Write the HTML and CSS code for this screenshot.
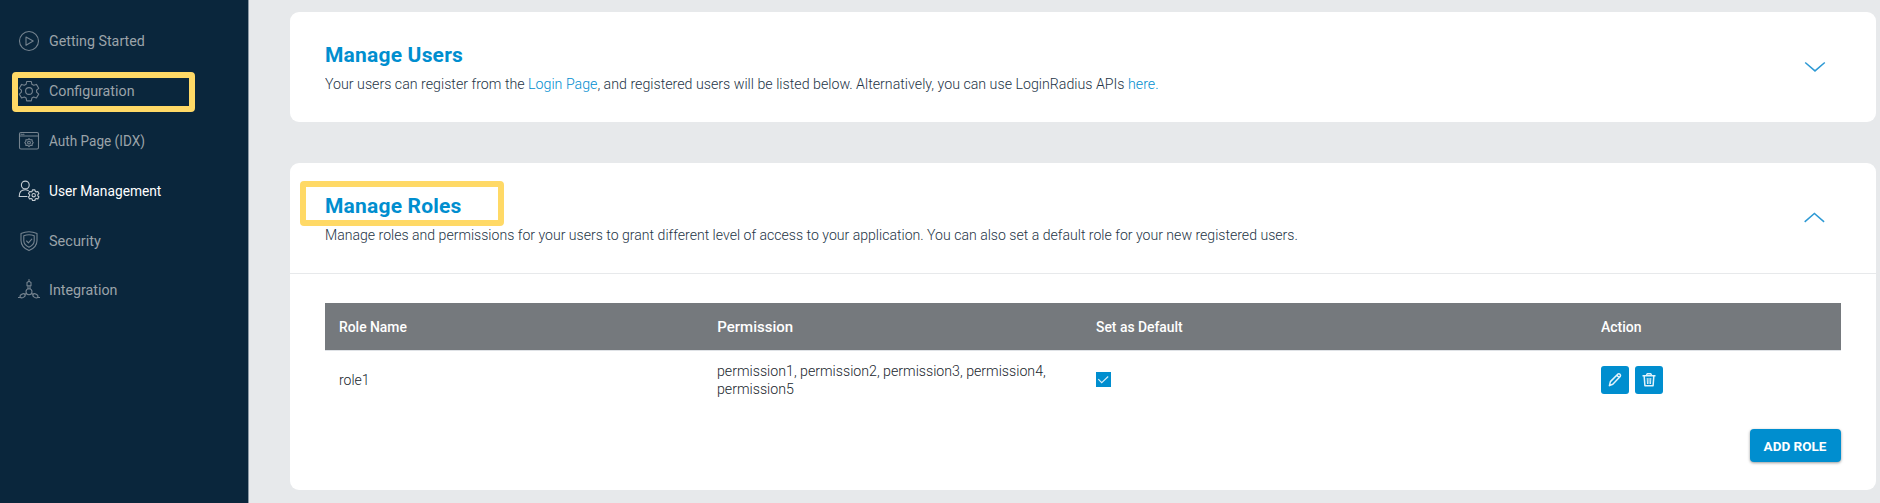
FILE: index.html
```html
<!DOCTYPE html>
<html lang="en">
<head>
<meta charset="utf-8">
<title>User Management</title>
<link rel="stylesheet" href="styles.css">
</head>
<body>
<div class="app">
  <nav class="sidebar">
    <a class="nav-item"><svg class="nav-icon" viewBox="0 0 22 22"><circle cx="11" cy="11" r="9.5"/><path d="M8 7v8.2l7.2-4.1z"/></svg><span class="n1">Getting Started</span></a>
    <a class="nav-item boxed"><svg class="nav-icon" viewBox="0 0 22 22"><path d="M8.7 1.5h4.6l.6 2.8 1.8 1 2.7-.9 2.3 3.900-2.100 1.900v2l2.100 1.900-2.300 3.900-2.700-.9-1.800 1-.6 2.800H8.700l-.6-2.800-1.800-1-2.700.9-2.300-3.900 2.100-1.900v-2L1.300 8.300l2.300-3.900 2.700.9 1.800-1z"/><circle cx="11" cy="11" r="3.400"/></svg><span class="n2">Configuration</span></a>
    <a class="nav-item"><svg class="nav-icon" viewBox="0 0 22 22"><rect x="1.500" y="2.500" width="19" height="16.500" rx="1.500"/><path d="M1.500 6h19M3 4.300h1M5 4.300h1"/><path d="M11 8.600l1.200 1.200 1.900-.1.100 1.800 1 1.100-1 1.200-.1 1.700-1.900-.1L11 16.600l-1.200-1.200-1.900.1-.1-1.700-1-1.200 1-1.100.1-1.800 1.900.1z"/><circle cx="11" cy="12.600" r="1.400"/></svg><span class="n3">Auth Page (IDX)</span></a>
    <a class="nav-item active"><svg class="nav-icon" viewBox="0 0 22 22"><circle cx="7.300" cy="5" r="3.900"/><path d="M9 16.500H1.200c0-4.500 2.300-6.700 6-6.700 1.300 0 2.300.3 3.100.8"/><path d="M14.500 9.900h2.400l.4 1.500 1 .5 1.500-.4 1.100 2-1.100 1.100v1.200l1.100 1.100-1.100 2-1.500-.4-1 .5-.4 1.500h-2.400l-.4-1.500-1-.5-1.500.4-1.100-2 1.100-1.100v-1.200l-1.100-1.100 1.100-2 1.500.4 1-.5z"/><circle cx="15.700" cy="15.200" r="1.700"/></svg><span class="n4">User Management</span></a>
    <a class="nav-item"><svg class="nav-icon" viewBox="0 0 22 22"><path d="M11 1.700c2.600 0 5.500.6 8 1.700v7c0 4.800-3 8-8 10.200-5-2.200-8-5.400-8-10.200v-7c2.500-1.100 5.400-1.700 8-1.700z"/><path d="M11 4.800c1.900 0 3.500.3 5.200 1v4.900c0 3.100-2 5-5.200 6.600-3.200-1.600-5.200-3.500-5.200-6.600V5.800c1.700-.7 3.300-1 5.200-1z"/><path d="M8.600 11l1.800 1.800 3.400-3.700"/></svg><span class="n5">Security</span></a>
    <a class="nav-item"><svg class="nav-icon" viewBox="0 0 22 22"><circle cx="11" cy="12.800" r="3"/><path d="M11 .5v2M9 3.500l2-1.200 2 1.200v3.200H9zM10 6.700v3.100M12 6.700v3.100M8.300 14.500l-1.200.8M13.700 14.500l1.200.8M.3 18.500h1.800M21.700 18.500h-1.800"/><ellipse cx="4.600" cy="16.800" rx="2.700" ry="1.800" transform="rotate(-28 4.600 16.800)"/><ellipse cx="17.400" cy="16.800" rx="2.700" ry="1.800" transform="rotate(28 17.400 16.800)"/></svg><span class="n6">Integration</span></a>
  </nav>
  <main class="content">
    <section class="card">
      <header class="card-head">
        <div>
          <h2>Manage Users</h2>
          <p class="d1">Your users can register from the <a>Login Page</a>, and registered users will be listed below. Alternatively, you can use LoginRadius APIs <a>here.</a></p>
        </div>
        <svg class="chevron" viewBox="0 0 22 12"><path d="M1.200 1.500l9.800 8.400 9.800-8.400"/></svg>
      </header>
    </section>
    <section class="card">
      <header class="card-head ruled">
        <div>
          <h2 class="boxed-title">Manage Roles</h2>
          <p class="d2">Manage roles and permissions for your users to grant different level of access to your application. You can also set a default role for your new registered users.</p>
        </div>
        <svg class="chevron" viewBox="0 0 22 12"><path d="M.7 9.900l9.700-8.400 9.700 8.400"/></svg>
      </header>
      <div class="card-body">
        <div class="row row-head">
          <div><span class="h1">Role Name</span></div>
          <div><span class="h2">Permission</span></div>
          <div><span class="h3">Set as Default</span></div>
          <div><span class="h4">Action</span></div>
        </div>
        <div class="row row-data">
          <div><span class="c1">role1</span></div>
          <div><span class="c2">permission1, permission2, permission3, permission4,<br>permission5</span></div>
          <div><span class="check"><svg viewBox="0 0 15 15"><path d="M2.300 7.200l3.400 3.400 6.500-6.100"/></svg></span></div>
          <div class="actions">
            <span class="icon-btn"><svg viewBox="0 0 28 28"><path d="M8.400 19.600l1-4 7.300-7.400q1.300-.9 2.300.1t.2 2.300l-7.400 7.600zM15.800 9.300l2.500 2.500"/></svg></span>
            <span class="icon-btn"><svg viewBox="0 0 28 28"><path d="M7.500 9.800h13M11.400 9.500l.8-1.700h3.600l.8 1.700M9.200 10.300l.7 9.400h8.200l.7-9.400"/><path class="thin" d="M12.200 12l.3 6M14 12v6M15.800 12l-.3 6"/></svg></span>
          </div>
        </div>
        <div class="footer"><button class="add">ADD ROLE</button></div>
      </div>
    </section>
  </main>
</div>
</body>
</html>
```
FILE: styles.css
```css
*, *::after { box-sizing: border-box; }
body { margin: 0; font-family: Roboto, "Liberation Sans", sans-serif; background: #e7e9eb; overflow: hidden; }
.app { display: flex; height: 503px; }
.sidebar { width: 249px; flex: none; background: #0a263c; border-right: 1px solid #8b99a5; padding-top: 16px; }
.nav-item { display: flex; align-items: center; height: 49.9px; padding-left: 18px; gap: 8.500px; color: #9ba3a9; font-size: 15.500px; white-space: nowrap; position: relative; }
.nav-icon { width: 22px; height: 22px; fill: none; stroke: #75838f; stroke-width: 1.100; stroke-linejoin: round; stroke-linecap: round; }
.active { color: #fff; }
.active .nav-icon { stroke: #c5ccd2; }
.boxed::after { content: ""; position: absolute; left: 12px; top: 6px; width: 183px; height: 40px; border: 6px solid #ffd966; border-radius: 4px; }
.content { flex: 1; padding: 12px 4px 0 40.500px; display: flex; flex-direction: column; gap: 41px; }
.card { background: #fff; border-radius: 9px; flex: none; }
.card-head { height: 110px; padding: 29px 50px 0 35.500px; display: flex; justify-content: space-between; white-space: nowrap; }
.ruled { height: 111px; border-bottom: 1px solid #e7e9eb; }
h2 { margin: 0; width: max-content; font-size: 21px; line-height: 28px; font-weight: 700; letter-spacing: .2px; color: #008ecf; position: relative; }
p { margin: 4px 0 0; width: max-content; font-size: 15px; line-height: 22px; font-weight: 300; color: #243446; }
p a { color: #008ecf; }
.boxed-title::after { content: ""; position: absolute; left: -25px; top: -11px; width: 204px; height: 45px; border: 6px solid #ffd966; border-radius: 4px; }
.chevron { width: 22px; height: 12px; margin-top: 20px; fill: none; stroke: #2d99d4; stroke-width: 1.500; }
.card-body { height: 216px; padding: 29px 35.500px 0; }
.row { display: grid; grid-template-columns: 378.800px 378.800px 505px 1fr; align-items: center; }
.row > div { padding-left: 13.500px; white-space: nowrap; }
.row-head { height: 48px; background: #75797d; border-bottom: 1px solid #dfe2e6; color: #fff; font-size: 15px; font-weight: 500; }
.row-data { height: 57px; font-size: 15px; line-height: 18px; color: #20262d; font-weight: 300; }

/* Condensed text */
.nav-item span, .row-head span, .c1, .c2, p { display: inline-block; transform-origin: 0 50%; }
.n1, .n2, .n6 { transform: scaleX(.92); }
.n3 { transform: scaleX(.875); }
.n4 { transform: scaleX(.887); }
.n5 { transform: scaleX(.935); }
.d1 { transform: scaleX(.947); }
.d2 { transform: scaleX(.9387); }
.h1, .h3 { transform: scaleX(.925); }
.h4, .c1 { transform: scaleX(.935); }
.c2 { transform: scaleX(.945); }

.check { display: block; width: 15px; height: 15px; background: #008ecf; }
.check svg { display: block; fill: none; stroke: #d7edf8; stroke-width: 1.200; }
.actions { display: flex; gap: 6px; }
.icon-btn { width: 28px; height: 28px; border-radius: 3px; background: #008ecf; }
.icon-btn svg { display: block; fill: none; stroke: #e3f3fb; stroke-width: 1.500; stroke-linejoin: round; }
.icon-btn .thin { stroke-width: 1; }
.footer { display: flex; justify-content: flex-end; padding-top: 21px; }
.add { width: 91px; height: 33px; padding: 0; border: 0; border-radius: 4px; background: #008ecf; color: #fff; font-family: inherit; font-size: 13.500px; font-weight: 700; box-shadow: 0 1px 3px rgba(0, 0, 0, .4); }
```
